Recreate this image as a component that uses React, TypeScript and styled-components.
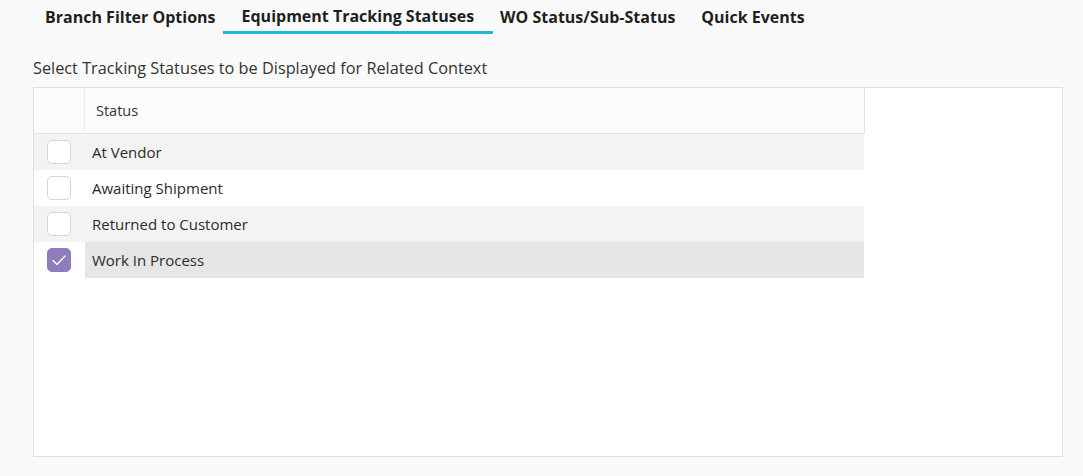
import React, { useState } from "react";
import styled, { createGlobalStyle } from "styled-components";

const GlobalStyle = createGlobalStyle`
  html, body { margin: 0; padding: 0; background: #fafafa; }
  body { font-family: "Open Sans", "Noto Sans", sans-serif; color: #262626; }
`;

const Page = styled.div`
  width: 1083px;
  height: 476px;
  box-sizing: border-box;
  padding: 0 20px 0 33px;
  display: flex;
  flex-direction: column;
`;

const TabBar = styled.div`
  display: flex;
  margin-left: -1px;
  height: 35px;
`;

const Tab = styled.div<{ $active?: boolean }>`
  padding: 0 ${(p) => (p.$active ? 19 : 13)}px;
  margin: 0 ${(p) => (p.$active ? -6 : 0)}px;
  font-size: 16px;
  font-weight: 700;
  color: #1f1f1f;
  line-height: 1;
  padding-top: ${(p) => (p.$active ? 9 : 10)}px;
  box-sizing: border-box;
  height: 35px;
  border-bottom: 3px solid ${(p) => (p.$active ? "#22b8d1" : "transparent")};
  margin-top: -1px;
  white-space: nowrap;
`;

const Caption = styled.div`
  margin-top: 23px;
  font-size: 16.3px;
  line-height: 20px;
  color: #333;
  height: 20px;
`;

const Panel = styled.div`
  margin-top: 9px;
  width: 1030px;
  height: 370px;
  box-sizing: border-box;
  background: #fff;
  border: 1px solid #e0e0e0;
`;

const Grid = styled.div`
  width: 831px;
  display: grid;
  grid-template-columns: 51px 1fr;
`;

const HeadCell = styled.div<{ $last?: boolean }>`
  height: 45px;
  background: #fcfcfc;
  border-bottom: 1px solid #e3e3e3;
  border-right: 1px solid ${(p) => (p.$last ? "#e3e3e3" : "#ececec")};
  display: flex;
  align-items: center;
  padding-left: 11px;
  font-size: 14.5px;
  color: #333;
`;

const CheckCell = styled.div<{ $shade: boolean }>`
  height: 36px;
  background: ${(p) => (p.$shade ? "#f3f3f3" : "#fff")};
  display: flex;
  align-items: center;
  justify-content: center;
  padding-right: 1px;
`;

const TextCell = styled.div<{ $bg: string }>`
  height: 36px;
  background: ${(p) => p.$bg};
  display: flex;
  align-items: center;
  padding-left: 7px;
  font-size: 15px;
  color: #2b2b2b;
  margin-right: 1px;
`;

const Box = styled.div<{ $checked: boolean }>`
  width: 22px;
  height: 22px;
  border-radius: 5px;
  border: 1px solid ${(p) => (p.$checked ? "#8d7dbd" : "#d6d6d6")};
  background: ${(p) => (p.$checked ? "#8d7dbd" : "#fff")};
  display: flex;
  align-items: center;
  justify-content: center;
`;

const rows = [
  { label: "At Vendor", checked: false },
  { label: "Awaiting Shipment", checked: false },
  { label: "Returned to Customer", checked: false },
  { label: "Work In Process", checked: true },
];

export default function App() {
  const [items] = useState(rows);
  return (
    <>
      <GlobalStyle />
      <Page>
        <TabBar>
          <Tab>Branch Filter Options</Tab>
          <Tab $active>Equipment Tracking Statuses</Tab>
          <Tab>WO Status/Sub-Status</Tab>
          <Tab>Quick Events</Tab>
        </TabBar>
        <Caption>Select Tracking Statuses to be Displayed for Related Context</Caption>
        <Panel>
          <Grid>
            <HeadCell />
            <HeadCell $last>Status</HeadCell>
            {items.map((r, i) => {
              const shade = i % 2 === 0;
              const bg = r.checked ? "#e6e6e6" : shade ? "#f3f3f3" : "#fff";
              return (
                <React.Fragment key={r.label}>
                  <CheckCell $shade={shade && !r.checked}>
                    <Box $checked={r.checked}>
                      {r.checked && (
                        <svg width="18" height="18" viewBox="0 0 18 18" fill="none">
                          <path d="M3 9.5 L7 13.5 L15 5" stroke="#fff" strokeWidth="1.3" strokeLinecap="round" strokeLinejoin="round" />
                        </svg>
                      )}
                    </Box>
                  </CheckCell>
                  <TextCell $bg={bg}>{r.label}</TextCell>
                </React.Fragment>
              );
            })}
          </Grid>
        </Panel>
      </Page>
    </>
  );
}
